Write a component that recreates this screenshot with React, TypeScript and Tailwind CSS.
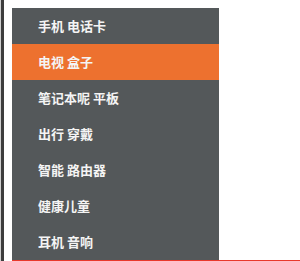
import React from "react";

const items = [
  "手机 电话卡",
  "电视 盒子",
  "笔记本呢 平板",
  "出行 穿戴",
  "智能 路由器",
  "健康儿童",
  "耳机 音响",
];

export default function App() {
  const active = 1;
  return (
    <div
      className="flex w-[300px] h-[261px] bg-white overflow-hidden"
      style={{ fontFamily: '"Noto Sans CJK SC", "Liberation Sans", sans-serif' }}
    >
      {/* left edge strip */}
      <div className="w-[1px] bg-[#cfcfcf]" />
      <div className="w-[3px] bg-[#3d3d3d]" />
      <div className="flex-1 flex flex-col pl-[8px] pt-[8px]">
        <ul className="w-[207px] bg-[#54585a]">
          {items.map((name, i) => (
            <li
              key={name}
              className={
                "h-[36px] flex items-center pl-[26px] text-[13px] font-bold text-[#f4f4f4] " +
                (i === active ? "bg-[#ed712f]" : "")
              }
            >
              {name}
            </li>
          ))}
        </ul>
        <div className="h-[1px] bg-[#e8392b]" />
      </div>
    </div>
  );
}
